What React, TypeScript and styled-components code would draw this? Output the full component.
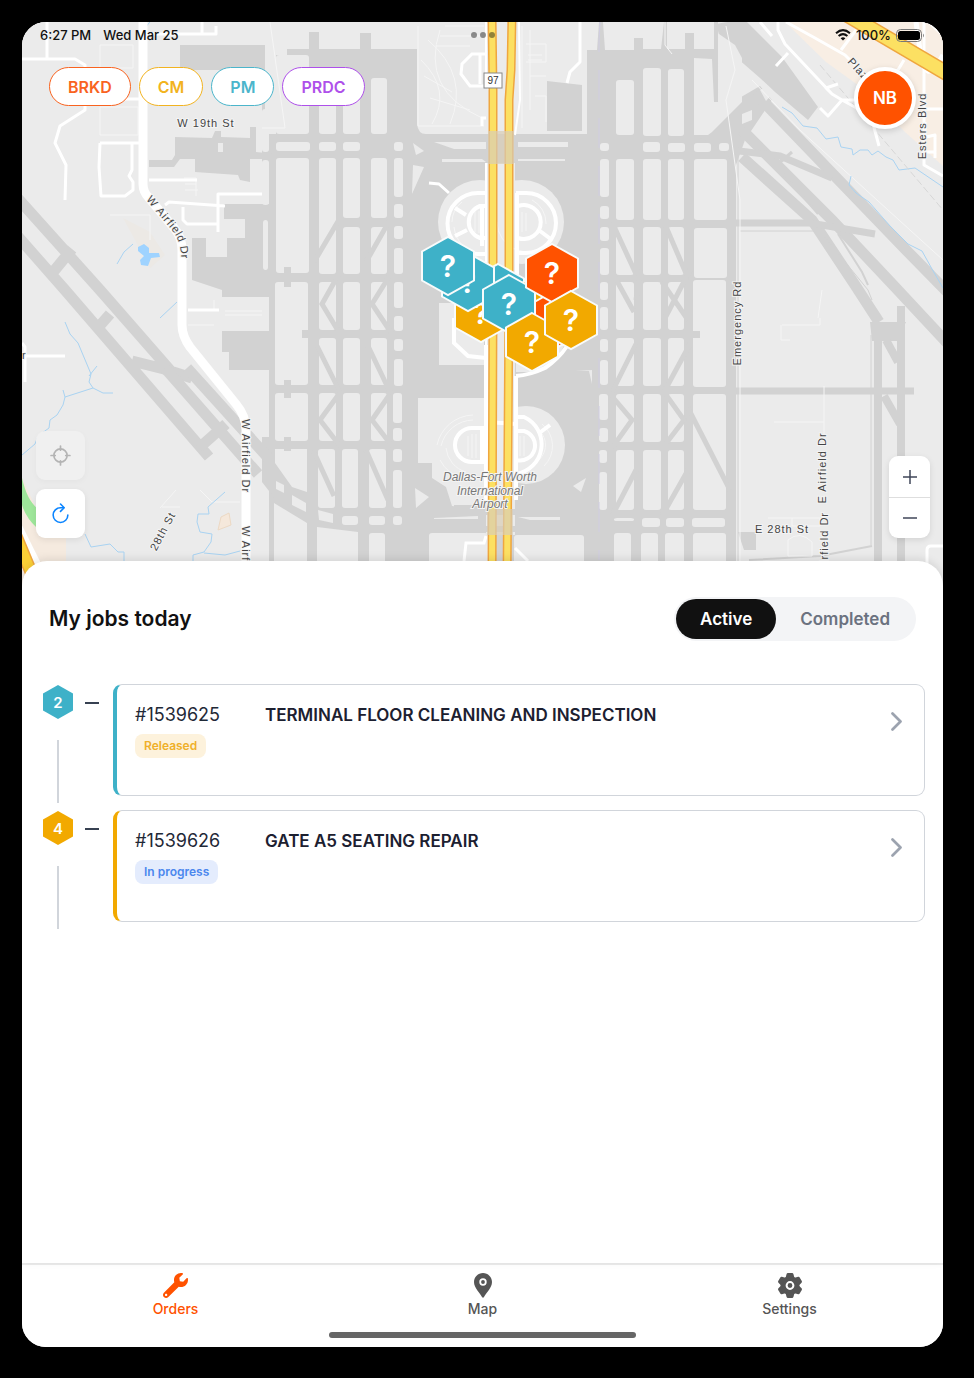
import React, { useState } from "react";
import styled, { createGlobalStyle } from "styled-components";
import { FaWrench } from "react-icons/fa";

const GlobalStyle = createGlobalStyle`
  *, *::before, *::after { box-sizing: border-box; }
  body {
    margin: 0;
    background: #000;
    font-family: Inter, "Liberation Sans", sans-serif;
    color: #1c2030;
  }
  button { font: inherit; color: inherit; cursor: pointer; }
  h1, h2, p { margin: 0; }
`;

const teal = "#3eb1c8";
const amber = "#f2a900";
const orange = "#ff5200";
const land = "#ebebeb";
const apron = "#d2d2d2";

const Bezel = styled.div`
  display: flex;
  min-height: 100vh;
  padding: 22px 31px 31px 22px;
`;

const Screen = styled.div`
  display: flex;
  flex: 1;
  flex-direction: column;
  overflow: hidden;
  border-radius: 24px;
  background: #fff;
`;

const MapArea = styled.section`
  position: relative;
  height: 564px;
  background: ${land};
`;

const MapCanvas = styled.svg`
  display: block;
  width: 100%;
  height: 100%;
`;

const Hud = styled.div`
  position: absolute;
  inset: 0;
  display: flex;
  flex-direction: column;
  padding-bottom: 48px;
`;

const StatusBar = styled.div`
  display: grid;
  grid-template-columns: 1fr auto 1fr;
  align-items: center;
  height: 26px;
  padding: 0 18px;
  font-size: 13px;
  font-weight: 500;
  color: #111;
`;

const StatusGroup = styled.div<{ $end?: boolean; $gap: number }>`
  display: flex;
  align-items: center;
  gap: ${(p) => p.$gap}px;
  justify-content: ${(p) => (p.$end ? "flex-end" : "flex-start")};
`;

const Dots = styled.div`
  display: flex;
  gap: 3px;
`;

const Dot = styled.span`
  width: 6px;
  height: 6px;
  border-radius: 50%;
  background: rgba(0, 0, 0, 0.42);
`;

const HudTop = styled.div`
  display: flex;
  justify-content: space-between;
  align-items: flex-start;
  padding: 19px 27px 0;
`;

const Filters = styled.div`
  display: flex;
  gap: 8px;
`;

const FilterPill = styled.button<{ $color: string }>`
  height: 39px;
  padding: 0 18px;
  border: 1px solid ${(p) => p.$color};
  border-radius: 20px;
  background: #fff;
  color: ${(p) => p.$color};
  font-size: 16px;
  font-weight: 600;
`;

const Avatar = styled.button`
  width: 62px;
  height: 62px;
  padding: 0;
  border: 4px solid #fff;
  border-radius: 50%;
  background: ${orange};
  color: #fff;
  font-size: 17px;
  font-weight: 600;
  box-shadow: 0 2px 6px rgba(0, 0, 0, 0.15);
`;

const HudBottom = styled.div`
  display: flex;
  flex: 1;
  justify-content: space-between;
  align-items: flex-end;
  padding: 0 13px 0 14px;
`;

const ToolStack = styled.div`
  display: flex;
  flex-direction: column;
  gap: 9px;
`;

const ToolButton = styled.button`
  display: grid;
  place-items: center;
  width: 49px;
  height: 49px;
  padding: 0;
  border: 0;
  border-radius: 9px;
  background: #fff;
  color: #0a84ff;
  box-shadow: 0 2px 6px rgba(0, 0, 0, 0.08);

  &:disabled {
    background: #f0f0f0;
    color: #b4b4b4;
    box-shadow: 0 2px 6px rgba(0, 0, 0, 0.03);
  }
`;

const ZoomStack = styled.div`
  display: flex;
  flex-direction: column;
  overflow: hidden;
  width: 41px;
  border-radius: 9px;
  background: #fff;
  box-shadow: 0 2px 6px rgba(0, 0, 0, 0.1);
`;

const ZoomButton = styled.button`
  display: grid;
  place-items: center;
  height: 41px;
  padding: 0;
  border: 0;
  background: none;
  color: #3f4658;

  & + & { border-top: 1px solid #dedede; }
`;

const Sheet = styled.main`
  position: relative;
  display: flex;
  flex: 1;
  flex-direction: column;
  gap: 43px;
  margin-top: -25px;
  padding-top: 36px;
  border-radius: 25px 25px 0 0;
  background: #fff;
  box-shadow: 0 -2px 8px rgba(0, 0, 0, 0.1);
`;

const SheetHeader = styled.header`
  display: flex;
  align-items: center;
  justify-content: space-between;
  padding: 0 27px;
`;

const Title = styled.h1`
  font-size: 21px;
  font-weight: 600;
  line-height: 30px;
  color: #111;
`;

const Segmented = styled.div`
  display: flex;
  height: 44px;
  padding: 2px;
  border-radius: 22px;
  background: #f3f4f6;
`;

const Segment = styled.button<{ $on: boolean }>`
  padding: 0 24px;
  border: 0;
  border-radius: 20px;
  background: ${(p) => (p.$on ? "#111" : "transparent")};
  color: ${(p) => (p.$on ? "#fff" : "#6b7280")};
  font-size: 17px;
  font-weight: 600;
`;

const JobList = styled.ul`
  display: flex;
  flex-direction: column;
  gap: 14px;
  margin: 0;
  padding: 0 18px 0 21px;
  list-style: none;
`;

const JobRow = styled.li`
  display: flex;
  height: 112px;
`;

const Timeline = styled.div`
  display: flex;
  flex-direction: column;
  align-items: center;
  gap: 21px;
  width: 30px;
  height: 119px;
  padding-top: 1px;
`;

const StopBadge = styled.span<{ $color: string }>`
  display: grid;
  place-items: center;
  width: 30px;
  height: 34px;
  flex: none;
  clip-path: polygon(50% 0, 100% 25%, 100% 75%, 50% 100%, 0 75%, 0 25%);
  background: ${(p) => p.$color};
  color: #fff;
  font-size: 15px;
  font-weight: 600;
`;

const Rail = styled.span`
  width: 2px;
  flex: 1;
  background: #d1d5db;
`;

const Dash = styled.span`
  width: 14px;
  height: 2px;
  margin: 18px 14px 0 12px;
  background: #374151;
`;

const JobCard = styled.button<{ $color: string }>`
  display: flex;
  flex: 1;
  align-items: flex-start;
  padding: 18px;
  border: 1px solid #d1d5db;
  border-left: 4px solid ${(p) => p.$color};
  border-radius: 9px;
  background: #fff;
  text-align: left;
`;

const JobMeta = styled.span`
  display: flex;
  flex-direction: column;
  align-items: flex-start;
  gap: 7px;
  width: 130px;
`;

const JobId = styled.span`
  font-size: 18px;
  line-height: 24px;
  color: #1f2937;
`;

const Status = styled.span<{ $fg: string; $bg: string }>`
  padding: 4px 9px;
  border-radius: 8px;
  background: ${(p) => p.$bg};
  color: ${(p) => p.$fg};
  font-size: 12px;
  font-weight: 600;
  line-height: 16px;
`;

const JobTitle = styled.span`
  flex: 1;
  font-size: 17px;
  font-weight: 600;
  line-height: 24px;
  color: #1c2030;
`;

const Chevron = styled.svg`
  width: 19px;
  height: 19px;
  margin-top: 9px;
`;

const TabBar = styled.nav`
  display: flex;
  flex-wrap: wrap;
  justify-content: center;
  align-items: flex-start;
  padding: 8px 0 9px;
  row-gap: 14px;
  border-top: 2px solid #ececec;
  background: #fff;
`;

const Tab = styled.a<{ $on?: boolean }>`
  display: flex;
  flex: 1 0 30%;
  flex-direction: column;
  align-items: center;
  gap: 2px;
  color: ${(p) => (p.$on ? orange : "#555")};
  font-size: 14px;
  font-weight: 500;
  line-height: 18px;
  text-decoration: none;

  svg { height: 25px; }
`;

const HomeBar = styled.span`
  width: calc(100% / 3);
  height: 6px;
  border-radius: 3px;
  background: #666;
`;

type Box = [number, number, number, number];

const leftCols: [number, number][] = [[319, 336], [343, 360], [371, 387]];
const rightCols: [number, number][] = [[616, 634], [643, 661], [668, 684]];

const span = (cols: [number, number][], y1: number, y2: number): Box[] =>
  cols.map(([a, b]) => [a, y1, b, y2]);

const infields: Box[] = [
  [276, 55, 309, 134],
  ...span(leftCols, 78, 134),
  [276, 142, 310, 151], [319, 142, 336, 151], [343, 142, 360, 151], [394, 142, 403, 151],
  [262, 109, 269, 152], [262, 160, 269, 205], [263, 220, 268, 270],
  [276, 158, 309, 273],
  [319, 158, 336, 274], [343, 158, 360, 218], [371, 158, 387, 218],
  [343, 227, 360, 274], [371, 227, 387, 274],
  [394, 158, 403, 197], [394, 204, 403, 218], [394, 226, 403, 239], [394, 248, 403, 274],
  [275, 282, 308, 385],
  ...span(leftCols, 282, 330),
  ...span(leftCols, 338, 385),
  [394, 282, 403, 308], [394, 316, 403, 331], [394, 339, 403, 351], [394, 359, 403, 386],
  [275, 393, 308, 441],
  ...span(leftCols, 393, 441),
  [393, 393, 402, 423], [393, 428, 402, 441],
  [318, 449, 335, 508], [342, 449, 358, 508], [369, 449, 386, 508],
  [393, 449, 402, 462], [393, 470, 402, 508],
  [342, 516, 358, 525], [369, 516, 385, 525], [393, 516, 402, 525],
  [369, 533, 385, 570],
  [429, 533, 488, 570],
  [616, 80, 634, 135], [643, 68, 661, 136], [668, 69, 684, 136],
  [600, 143, 609, 151], [643, 142, 660, 152], [668, 143, 685, 152], [694, 143, 711, 152], [719, 143, 729, 151],
  [600, 159, 609, 197], [600, 206, 609, 219], [600, 227, 609, 241], [600, 248, 609, 275],
  ...span(rightCols, 159, 220),
  [694, 159, 727, 220],
  ...span(rightCols, 227, 275),
  [694, 228, 727, 278],
  ...span(rightCols, 282, 330),
  [693, 280, 726, 387],
  [600, 282, 608, 300], [600, 307, 608, 330], [600, 339, 608, 352], [600, 360, 608, 385],
  ...span(rightCols, 338, 386),
  [599, 394, 608, 420], [599, 428, 608, 442],
  ...span(rightCols, 394, 442),
  [693, 394, 726, 510],
  [599, 450, 607, 463], [599, 472, 607, 510],
  ...span(rightCols, 450, 510),
  [614, 518, 634, 521], [642, 518, 660, 527], [666, 518, 684, 527], [692, 518, 725, 527],
  [614, 533, 631, 570], [641, 533, 658, 570], [665, 533, 684, 570], [693, 533, 726, 570],
  [514, 535, 584, 570],
];

const taxiways =
  "M340 218 L314 262 M391 218 L366 262 M340 272 L322 304 L340 334 M392 272 L372 304 L392 334" +
  "M317 346 L340 392 M368 346 L390 392 M339 394 L320 420 L340 446 M390 394 L372 420 L392 446" +
  "M313 450 L334 496 M366 450 L388 500" +
  "M612 222 L636 274 M664 222 L688 278 M612 272 L634 312 M690 270 L664 320 L664 330 M640 270 L636 300" +
  "M612 392 L636 344 M664 392 L690 344 M610 394 L632 420 L612 448 M664 392 L684 420 L664 446" +
  "M636 470 L612 516 M688 470 L662 516 M688 408 L730 490 M662 282 L688 320";

type LabelData = { text: string; x: number; y: number; angle?: number; anchor?: "start" | "middle" | "end" };

const labels: LabelData[] = [
  { text: "W 19th St", x: 206, y: 127 },
  { text: "W Airfield Dr", x: 242, y: 456, angle: 90 },
  { text: "W Airf", x: 242, y: 526, angle: 90, anchor: "start" },
  { text: "28th St", x: 166, y: 533, angle: -62 },
  { text: "Emergency Rd", x: 741, y: 323, angle: -90 },
  { text: "E Airfield Dr", x: 826, y: 468, angle: -90 },
  { text: "irfield Dr", x: 828, y: 512, angle: -90, anchor: "end" },
  { text: "E 28th St", x: 782, y: 533 },
  { text: "Plaz", x: 847, y: 62, angle: 48, anchor: "start" },
  { text: "Esters Blvd", x: 926, y: 126, angle: -90 },
  { text: "r", x: 22, y: 359, anchor: "start" },
];

const Label = styled.text<{ $park?: boolean }>`
  font-family: "Liberation Sans", Arial, sans-serif;
  font-size: ${(p) => (p.$park ? "12px" : "11px")};
  font-style: ${(p) => (p.$park ? "italic" : "normal")};
  letter-spacing: ${(p) => (p.$park ? "0" : "1px")};
  fill: ${(p) => (p.$park ? "#777" : "#444")};
  stroke: #f4f4f4;
  stroke-width: 2px;
  paint-order: stroke;
`;

const PinText = styled.text`
  font-size: 30px;
  font-weight: 600;
  fill: #fff;
`;

type PinData = { x: number; y: number; color: string; mark?: boolean };

const pins: PinData[] = [
  { x: 549, y: 323, color: orange },
  { x: 498, y: 293, color: teal },
  { x: 481, y: 313, color: amber, mark: true },
  { x: 538, y: 303, color: amber },
  { x: 547, y: 324, color: orange },
  { x: 468, y: 282, color: teal, mark: true },
  { x: 509, y: 304, color: teal, mark: true },
  { x: 552, y: 273, color: orange, mark: true },
  { x: 532, y: 342, color: amber, mark: true },
  { x: 571, y: 320, color: amber, mark: true },
  { x: 448, y: 266, color: teal, mark: true },
];

function Pin({ x, y, color, mark }: PinData) {
  return (
    <g transform={`translate(${x} ${y})`}>
      <path d="M0 -29 L26 -14.5 V14.5 L0 29 L-26 14.5 V-14.5 Z" fill={color} stroke="#f8fbfb" strokeWidth="2" />
      {mark && <PinText textAnchor="middle" y="11">?</PinText>}
    </g>
  );
}

function AirportMap() {
  return (
    <MapCanvas viewBox="22 22 921 564" preserveAspectRatio="xMidYMid slice" role="img" aria-label="Dallas-Fort Worth International Airport map">
      <rect x="22" y="22" width="921" height="564" fill={land} />

      {/* north-east district */}
      <path d="M785 22 H943 V166 L905 132 L862 88 L826 62 Z" fill="#f8eee4" />
      <path d="M22 478 L36 508 V530 H66 V586 H22 Z" fill="#f5eadf" />
      <path d="M22 478 Q27 500 37 508 V528 Q26 518 22 505 Z" fill="#9ee69a" />
      <path d="M221 517 L229 513 L231 525 L218 530 Z" fill="#f5e8db" stroke="#ecd9c4" />
      <path d="M123 218 L150 232 L165 255 L150 268 L135 240 Z" fill="#ece9e5" />

      {/* terminal aprons and the runway grid */}
      <g fill={apron}>
        <path d="M287 49 H309 V32 H319 V49 H360 V33 H371 V49 H417 V124 Q418 134 426 134 H587 V50 H597 L599 22 H603 L605 50 H634 V38 H643 V49 H661 L664 22 H667 V49 H685 V33 H694 V49 H714 V22 H718 V102 H727 V134 L736 140 V586 H269 V134 H276 V55 H287 Z" />
        <path d="M180 45 H265 V134 H276 V165 H262 V70 H180 Z" />
        <path d="M175 137 L212 138 L215 131 H221 V137 L250 138 V127 H256 V152 L275 154 V159 H250 V182 L240 180 L238 175 L195 172 V159 H180 L174 167 H149 V160 H172 L175 155 Z" />
        <path d="M224 204 H270 V297 H222 V290 L192 280 V238 H206 V257 H227 V238 H245 V219 H224 Z" />
        <path d="M222 331 H270 V370 H229 V352 H222 Z" />
        <path d="M262 437 H276 V500 L262 482 Z M547 81 L582 85 V131 H547 Z" />
        <path d="M722 45 L716 24 L727 22 H747 L782 57 L818 107 L808 120 L775 92 L760 78 Z" />
        <path d="M697 136 L736 100 L760 86 L772 100 L745 140 L736 165 L722 150 Z" />
        <path d="M870 322 H906 L897 341 H872 Z M738 532 H756 V550 H744 Z" />
      </g>
      <path d="M694 58 L712 59 L714 102 H718 L719 34 L735 45 L742 58 V102 L712 132 L708 135 H694 Z" fill={land} />
      <rect x="218" y="143" width="5" height="9" fill={land} />

      {/* runway strokes */}
      <g fill="none" stroke={apron} strokeWidth="11">
        <path d="M14 194 L100 290 L170 370 M14 232 L65 290 L209 457 M132 361 L164 369 L192 378 M72 249 L54 271 M110 314 L96 330" />
        <path d="M165 368 L258 474 M187 368 L272 462 M199 448 L226 424" />
        <path d="M755 93 L829 170 L909 253 L955 300 M742 130 L832 220 L895 287 L950 346 M742 157 L812 220 L855 285 L879 322" />
        <path d="M731 150 L780 156 L832 178 M726 223 H810 L875 234" strokeWidth="7" />
        <path d="M726 391 H914" strokeWidth="7" />
        <path d="M878 322 V586 M901 306 V586 M886 340 L898 362 M884 396 L900 424" strokeWidth="8" />
        <path d="M871 335 V545 M738 120 V586 M740 231 H820 L868 290 L872 300" strokeWidth="1" />
        <path d="M749 560 L820 556 L872 546 M778 168 L818 214 M838 234 L862 272 L868 285" strokeWidth="2" />
        <path d="M778 164 L792 152" strokeWidth="3" />
      </g>

      {/* grass between the taxiways */}
      <g fill={land}>
        {infields.map(([x1, y1, x2, y2], i) => (
          <rect key={i} x={x1} y={y1} width={x2 - x1} height={y2 - y1} rx="3" />
        ))}
        <path d="M275 449 H307 V492 L292 487 L275 463 Z M262 494 L268 504 V586 H262 Z M274 503 L307 523 V586 H274 Z M317 527 L358 532 V586 H317 Z" />
        <path d="M276 481 L284 485 V493 L276 489 Z M292 495 L306 503 V512 L292 505 Z M318 510 L333 514 V523 L319 520 Z" />
        <path d="M760 90 L768 86 L774 92 L766 101 Z M742 114 L752 110 L752 120 L742 124 Z" />
        <path d="M439 303 H484 V365 H439 Z M418 398 H486 V510 L452 506 L446 487 L432 478 V463 H418 Z" />
        <path d="M434 142 L454 149 H486 V142 Z M442 159 H482 L486 162 H442 Z M518 142 H568 V147 H518 Z M518 159 H565 V161 H518 Z" />
        <path d="M413 143 L424 151 L416 155 Z M413 165 L424 167 L412 194 Z M434 518 L478 516 V519 H434 Z M518 517 H560 V520 H530 Z" />
        <path d="M415 488 L429 497 L416 508 Z M573 486 L586 478 L581 492 Z M576 371 L592 370 V384 L589 371 Z" />
        <circle cx="480" cy="222" r="42" />
        <circle cx="522" cy="222" r="42" />
        <circle cx="526" cy="445" r="39" />
        <path d="M486 163 H515 V535 H486 Z" />
        <path d="M516 285 H570 Q578 350 540 372 H516 Z" />
      </g>
      <path d={taxiways} fill="none" stroke={apron} strokeWidth="5" />
      <path d="M454 508 H486 M518 508 H560 M400 512 H590 M400 529 H590" stroke={apron} strokeWidth="6" />
      <path d="M284 385 V380 H291 V398 H284 Z M284 437 H291 V451 H284 Z M302 330 H310 V338 H302 Z M693 331 H700 V338 H693 Z M284 270 V267 H291 V287 H284 Z" fill={apron} />

      {/* parking rows */}
      <g fill="none" stroke="#f5f5f5" strokeWidth="1">
        <path d="M418 26 V126 H484 M421 60 Q452 90 432 124 M428 40 Q470 76 450 124 M440 30 Q420 90 482 118 M445 26 H484 M440 36 H482 M436 46 H470 M424 76 L452 92 M430 98 L470 110" />
        <path d="M522 26 V128 M530 30 V110 M526 44 H546 V62 H526 M528 55 H542 M528 60 H542 M530 76 H546 M535 96 H546 V122" />
        <path d="M505 222 m-8 0 a30 30 0 0 0 50 22 M532 200 a26 26 0 0 1 14 24 M528 206 a20 20 0 0 1 12 18 M462 202 a26 26 0 0 0 -10 20 M462 245 a34 34 0 0 1 -8 -18" />
        <path d="M437 445 a38 38 0 0 1 36 -30 M441 446 a34 34 0 0 1 32 -26 M446 448 a28 28 0 0 0 20 24 M440 460 a34 34 0 0 0 24 18 M536 428 a20 20 0 0 1 0 34 M542 424 a28 28 0 0 1 2 42" />
        <path d="M475 212 V232 M479 211 V233 M483 211 V233 M518 212 V232 M522 212 V232 M526 213 V231 M468 436 V456 M472 434 V458 M476 434 V458 M520 436 V456 M524 436 V456" />
        <path d="M100 45 H133 V68 H100 Z M100 107 H138 V135 H100 Z M110 215 H150 V240 M184 178 H196 V196 M185 184 H196 M185 190 H198 M200 310 H214 V300 M188 325 H214 M225 311 H262 M225 315 H262" />
        <path d="M160 508 L176 490 M162 507 H180 M200 490 L212 502 H240 M782 325 H820 V318 M781 325 V340 H790 M774 422 H824 M824 386 V434 M822 290 L818 318 M768 518 H820 V526 H792 V518 M788 540 Q800 530 812 542 V556 H788 Z" />
        <path d="M726 26 L735 70 L726 100 L740 200 V570 M752 80 L800 130 L943 260" />
        <path d="M270 22 L285 128 H262 M665 22 V45 L672 54" />
      </g>

      {/* creeks and ponds */}
      <g fill="none" stroke="#a9d3f2" strokeWidth="1">
        <path d="M65 322 L70 334 L78 343 L91 374 L89 382 L93 388 L65 397 L63 405 L57 415 L50 420 L49 428 L38 436 L35 444 L22 455 M63 390 L65 397 M97 366 L89 376 M93 388 L103 393 H113 M160 318 L177 302 M117 264 L124 252 L133 244" />
        <path d="M85 534 L91 547 L110 544 L118 552 H124 V562 M225 492 L208 507 L209 514 L198 514 L197 522 L200 532 L212 534 L211 542 L204 552 L193 555 V562 M204 553 L225 555 L240 551" />
        <path d="M782 107 L792 113 L803 126 L817 128 L826 139 L838 137 L841 147 L852 149 L853 155 L860 150 L868 150 L872 155 L878 151 L886 157 L893 160 L899 170 L915 168 L943 187" />
        <path d="M851 176 L849 185 L856 193 L869 202 L890 226 L908 244 L922 251 L932 269 L943 288 M150 22 L143 30" />
      </g>
      <path d="M138 247 L144 244 L149 248 V253 L159 253 L160 257 L151 258 L148 266 L141 265 L140 260 L144 256 L138 251 Z" fill="#9fd3ff" />
      <path d="M600 22 L599 40 V560" fill="none" stroke="#d0cde2" strokeWidth="1" strokeDasharray="30 18" />
      <path d="M820 65 L943 210" fill="none" stroke="#d6d6d6" strokeWidth="1" strokeDasharray="7 3" />

      {/* minor roads */}
      <g fill="none" stroke="#fff" strokeWidth="3" strokeLinejoin="round">
        <path d="M47 22 V59 M22 59 H75 L85 65 V110 L60 126 L55 143 L66 165 L65 200 M100 143 H139 M100 143 L99 167 L101 196 H125 L133 190 V182 L129 176 L132 170 V143" />
        <path d="M149 180 H197 M165 205 L169 202 L225 206 M218 232 V194 H262 M183 207 V220 L187 224 H218 M188 310 H219 M22 343 L25 347 V382 M25 356 H65 M150 34 H216 V26 M202 22 V34 M120 99 H143" />
        <path d="M580 22 V62 L570 72 L567 83 M429 183 L439 184 L449 193" />
        <path d="M778 22 V30 L785 44 L832 94 L842 100 L864 112 M776 66 L788 53 M760 22 L772 36 M832 94 L826 88 L838 84 M842 100 L828 116 L820 108 M842 100 H862 M872 120 L879 146" />
        <path d="M786 22 L815 38 L845 55 L880 90 M841 50 L856 30 M924 22 V165 L943 176 M895 75 L904 60 M925 109 H943 M926 137 L935 135 V158 M925 152 H935 M925 138 V122" />
      </g>
      <path d="M916 22 L920 50 Q925 90 943 55 M930 22 L943 34" fill="none" stroke="#fff" strokeWidth="5" />
      <path d="M927 586 V550 Q927 546 931 546 H943" fill="none" stroke="#fff" strokeWidth="3" />
      <path d="M464 561 L466 543 H484 L486 536 M515 548 L528 561" fill="none" stroke="#fff" strokeWidth="3" />

      {/* terminal loops */}
      <g fill="none" stroke="#fff" strokeWidth="4">
        <path d="M486 54 H472 L462 64 L461 74 L470 86 H486 M480 54 V84 M482 126 V118 H486" strokeWidth="3" />
        <path d="M486 193 H478 A30 30 0 0 0 478 254 H486 M486 206 H480 A17 17 0 0 0 480 238 H486 M482 206 V246 M455 208 L466 215 M455 236 L467 230" />
        <path d="M516 193 H526 A30 30 0 0 1 526 253 H516 M518 206 A17 17 0 1 1 518 238 M540 231 L552 240 M517 193 V290" />
        <path d="M486 428 H472 A17 17 0 0 0 472 462 H486 M482 428 V462 M486 422 L516 424" />
        <path d="M516 417 H524 A30 30 0 0 1 516 474 M516 431 H524 A15 15 0 0 1 516 460 M538 434 L550 425 M516 376 V500 M486 345 V500" />
        <path d="M454 318 V343 L468 356 L486 358 M578 318 Q572 350 545 368 Q530 375 516 376" />
        <path d="M486 163 V345 M519 22 L520 100 L515 135 M486 22 V76 L489 90" strokeWidth="2" />
      </g>

      {/* arterials */}
      <path d="M143 16 V184 Q143 192 149 198 L174 228 Q182 237 182 250 V325 Q182 336 190 347 L236 404 Q246 416 246 430 V586" fill="none" stroke="#fff" strokeWidth="9" />
      <path d="M492 16 L493 90 V300 L492 586 M512 16 L511 70 L509 100 V300 L507 586" fill="none" stroke="#efa63f" strokeWidth="9" />
      <path d="M492 16 L493 90 V300 L492 586 M512 16 L511 70 L509 100 V300 L507 586" fill="none" stroke="#fce062" strokeWidth="6" />
      <path d="M488 131 H514 V164 H488 Z M487 509 H513 V535 H487 Z" fill="#d8cdb6" fillOpacity="0.7" />
      <path d="M846 14 L955 78" fill="none" stroke="#efa63f" strokeWidth="16" />
      <path d="M846 14 L955 78" fill="none" stroke="#fce062" strokeWidth="13" />
      <path d="M18 524 L44 576" stroke="#fff" strokeWidth="6" />
      <path d="M16 536 L36 584" stroke="#efa63f" strokeWidth="13" />
      <path d="M16 536 L36 584" stroke="#fbd037" strokeWidth="10" />

      <rect x="484" y="73" width="18" height="15" fill="#fff" stroke="#888" />
      <text x="493" y="84" fontSize="10" fontFamily="Liberation Sans, sans-serif" textAnchor="middle" fill="#333">97</text>

      <path id="airfieldDrive" d="M149 197 L176 229 Q186 241 185 264 V300" fill="none" />
      <Label dy="4">
        <textPath href="#airfieldDrive">W Airfield Dr</textPath>
      </Label>
      {labels.map((l, i) => (
        <Label
          key={i}
          textAnchor={l.anchor ?? "middle"}
          transform={`translate(${l.x} ${l.y}) rotate(${l.angle ?? 0})`}
        >
          {l.text}
        </Label>
      ))}
      <Label $park textAnchor="middle" x="490" y="481">Dallas-Fort Worth</Label>
      <Label $park textAnchor="middle" x="490" y="495">International</Label>
      <Label $park textAnchor="middle" x="490" y="508">Airport</Label>

      {pins.map((p, i) => <Pin key={i} {...p} />)}
    </MapCanvas>
  );
}

const filters = [
  { name: "BRKD", color: "#f9631f" },
  { name: "CM", color: "#f2b320" },
  { name: "PM", color: "#4bb5cb" },
  { name: "PRDC", color: "#ae50ea" },
];

const jobs = [
  { stop: 2, id: "#1539625", title: "TERMINAL FLOOR CLEANING AND INSPECTION", status: "Released", color: teal, fg: "#efb02a", bg: "#fdf2dc" },
  { stop: 4, id: "#1539626", title: "GATE A5 SEATING REPAIR", status: "In progress", color: amber, fg: "#4b87ee", bg: "#e4ecfd" },
];

export default function App() {
  const [view, setView] = useState("Active");

  return (
    <>
      <GlobalStyle />
      <Bezel>
        <Screen>
          <MapArea>
            <AirportMap />
            <Hud>
              <StatusBar>
                <StatusGroup $gap={12}>
                  <span>6:27 PM</span>
                  <span>Wed Mar 25</span>
                </StatusGroup>
                <Dots><Dot /><Dot /><Dot /></Dots>
                <StatusGroup $gap={5} $end>
                  <svg width="16" height="12" viewBox="0 0 16 12" fill="none" stroke="#111" strokeWidth="2">
                    <path d="M1 4.3 Q8 -2 15 4.3 M3.6 7 Q8 3.2 12.4 7" />
                    <path d="M8 11.6 L5.6 9.2 Q8 7.2 10.4 9.2 Z" fill="#111" stroke="none" />
                  </svg>
                  <span>100%</span>
                  <svg width="29" height="13" viewBox="0 0 29 13">
                    <rect x="0.5" y="0.5" width="25" height="12" rx="4" fill="none" stroke="#777" />
                    <rect x="2" y="2" width="22" height="9" rx="2.5" fill="#000" />
                    <path d="M27 4.5 Q29 6.5 27 8.5 Z" fill="#888" />
                  </svg>
                </StatusGroup>
              </StatusBar>
              <HudTop>
                <Filters>
                  {filters.map((f) => (
                    <FilterPill key={f.name} type="button" $color={f.color}>{f.name}</FilterPill>
                  ))}
                </Filters>
                <Avatar type="button" aria-label="Profile NB">NB</Avatar>
              </HudTop>
              <HudBottom>
                <ToolStack>
                  <ToolButton type="button" aria-label="Locate me" disabled>
                    <svg width="21" height="21" viewBox="0 0 20 20" fill="none" stroke="currentColor" strokeWidth="1.6" strokeLinecap="round">
                      <circle cx="10" cy="10" r="6.3" />
                      <path d="M10 1 V5 M10 15 V19 M1 10 H5 M15 10 H19" />
                    </svg>
                  </ToolButton>
                  <ToolButton type="button" aria-label="Refresh">
                    <svg width="21" height="21" viewBox="0 0 20 20" fill="none" stroke="currentColor" strokeWidth="1.5" strokeLinecap="round" strokeLinejoin="round">
                      <path d="M13 4.5 H10 A7 7 0 1 0 17 11.5" />
                      <path d="M10 1 L13.5 4.5 L10 8" />
                    </svg>
                  </ToolButton>
                </ToolStack>
                <ZoomStack>
                  <ZoomButton type="button" aria-label="Zoom in">
                    <svg width="14" height="14" viewBox="0 0 14 14" stroke="currentColor" strokeWidth="1.5">
                      <path d="M7 0 V14 M0 7 H14" />
                    </svg>
                  </ZoomButton>
                  <ZoomButton type="button" aria-label="Zoom out">
                    <svg width="14" height="14" viewBox="0 0 14 14" stroke="currentColor" strokeWidth="1.5">
                      <path d="M0 7 H14" />
                    </svg>
                  </ZoomButton>
                </ZoomStack>
              </HudBottom>
            </Hud>
          </MapArea>

          <Sheet>
            <SheetHeader>
              <Title>My jobs today</Title>
              <Segmented>
                {["Active", "Completed"].map((name) => (
                  <Segment key={name} type="button" $on={view === name} aria-pressed={view === name} onClick={() => setView(name)}>
                    {name}
                  </Segment>
                ))}
              </Segmented>
            </SheetHeader>
            <JobList>
              {jobs.map((job) => (
                <JobRow key={job.id}>
                  <Timeline>
                    <StopBadge $color={job.color}>{job.stop}</StopBadge>
                    <Rail />
                  </Timeline>
                  <Dash />
                  <JobCard type="button" $color={job.color}>
                    <JobMeta>
                      <JobId>{job.id}</JobId>
                      <Status $fg={job.fg} $bg={job.bg}>{job.status}</Status>
                    </JobMeta>
                    <JobTitle>{job.title}</JobTitle>
                    <Chevron viewBox="0 0 19 19" fill="none" stroke="#9ca3af" strokeWidth="2.7" strokeLinecap="round" strokeLinejoin="round">
                      <path d="M5.5 1.5 L13.5 9.5 L5.5 17.5" />
                    </Chevron>
                  </JobCard>
                </JobRow>
              ))}
            </JobList>
          </Sheet>

          <TabBar>
            <Tab href="#orders" $on>
              <FaWrench size={25} />
              Orders
            </Tab>
            <Tab href="#map">
              <svg width="18" height="25" viewBox="0 0 18 25">
                <path d="M9 0 C4 0 0 4 0 9 C0 15 6 20 8 24 Q9 25.5 10 24 C12 20 18 15 18 9 C18 4 14 0 9 0 Z" fill="currentColor" />
                <circle cx="9" cy="9" r="2.8" fill="none" stroke="#fff" strokeWidth="1.8" />
              </svg>
              Map
            </Tab>
            <Tab href="#settings">
              <svg width="26" height="25" viewBox="-13 -12.5 26 25">
                <g fill="currentColor">
                  <circle r="9.4" />
                  {[0, 60, 120, 180, 240, 300].map((a) => (
                    <path key={a} transform={`rotate(${a})`} d="M-4.6 -7 L-3.4 -11.4 Q-3.1 -12.4 -2.1 -12.4 H2.1 Q3.1 -12.4 3.4 -11.4 L4.6 -7 Z" />
                  ))}
                </g>
                <circle r="3.4" fill="none" stroke="#fff" strokeWidth="2" />
              </svg>
              Settings
            </Tab>
            <HomeBar />
          </TabBar>
        </Screen>
      </Bezel>
    </>
  );
}
